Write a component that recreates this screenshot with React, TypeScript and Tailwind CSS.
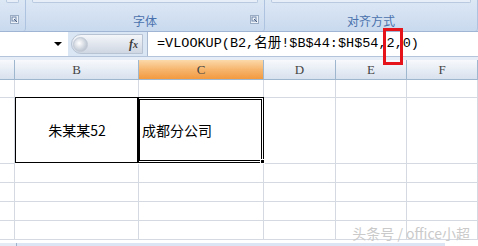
import React from "react";

const GRID = "#d4d9e2";
const COLS = ["", "B", "C", "D", "E", "F"];
const ROW_HEIGHTS = [18, 66, 19, 19, 19, 19];

function Launcher() {
  return (
    <svg width="9" height="9" viewBox="0 0 9 9" className="shrink-0">
      <rect x="0.5" y="0.5" width="8" height="8" fill="#eef3fa" stroke="#9aabc4" />
      <rect x="2" y="2" width="4" height="4" fill="none" stroke="#6f86a8" />
      <path d="M4 4 L7 7" stroke="#4a5f80" strokeWidth="1" />
    </svg>
  );
}

function RibbonGroup({ label, className }: { label?: string; className: string }) {
  return (
    <div
      className={`flex flex-col border-r border-[#aec3df] rounded-br-[3px] bg-gradient-to-b from-[#dde8f5] to-[#c9d9ee] ${className}`}
    >
      <div className="h-[3px] mx-[6px] border-x border-b border-[#b8c9e0] rounded-b-[2px] bg-[#e7eef8]" />
      <div className="flex-1 flex items-end justify-center pb-[3px] relative">
        {label && (
          <span className="text-[12px] leading-none text-[#4a72ad] pb-[1px] font-['Noto_Sans_CJK_SC',sans-serif]">
            {label}
          </span>
        )}
      </div>
    </div>
  );
}

export default function App() {
  return (
    <div className="w-[478px] h-[246px] overflow-hidden relative bg-white font-['Noto_Sans_CJK_SC',sans-serif]">
      {/* ribbon */}
      <div className="h-[32px] flex bg-[#c6d6ec] border-b border-[#9fb5d3]">
        <RibbonGroup className="w-[26px]" />
        <RibbonGroup label="字体" className="w-[239px]" />
        <RibbonGroup label="对齐方式" className="flex-1" />
      </div>
      <div className="absolute left-[10px] top-[15px]">
        <Launcher />
      </div>
      <div className="absolute left-[250px] top-[15px]">
        <Launcher />
      </div>

      {/* formula bar */}
      <div className="h-[25px] flex bg-[#dbe6f4] border-b border-[#b4c4da]">
        <div className="w-[68px] bg-white flex items-center justify-end pr-[6px]">
          <span className="w-0 h-0 border-x-[4px] border-x-transparent border-t-[4px] border-t-black" />
        </div>
        <div className="w-[79px] flex items-center pl-[3px] pr-[4px]">
          <div className="flex-1 h-[20px] rounded-l-full rounded-r-[2px] bg-gradient-to-b from-[#f4f6f9] via-[#e1e6ee] to-[#cfd7e3] border border-[#b7c3d3] flex items-center justify-between">
            <span className="w-[15px] h-[15px] ml-[1px] rounded-full bg-[radial-gradient(circle_at_40%_40%,#ffffff,#c9d0da_60%,#a9b3c2)] border border-[#c2cad6]" />
            <span className="text-[12px] italic font-bold leading-none text-[#3c3c3c] pr-[4px] font-['Liberation_Serif',serif]">
              f<span className="text-[10px]">x</span>
            </span>
          </div>
        </div>
        <div className="flex-1 bg-white border-l border-[#a9b9cf] flex items-center pl-[9px]">
          <span className="text-[13.5px] leading-none text-black whitespace-pre font-['Liberation_Mono','Noto_Sans_CJK_SC',monospace]">
            =VLOOKUP(B2,名册!$B$44:$H$54,2,0)
          </span>
        </div>
      </div>

      <div className="h-[3px] bg-[#e6edf6]" />

      {/* grid */}
      <div className="grid grid-cols-[15px_124px_125px_72px_71px_1fr]">
        {COLS.map((c) => (
          <div
            key={c || "corner"}
            className={`h-[20px] flex items-center justify-center border-r border-b border-[#9eb6ce] text-[13px] leading-none text-[#444] font-['Liberation_Serif',serif] ${
              c === "C"
                ? "bg-gradient-to-b from-[#fbd9a9] via-[#f6b56d] to-[#f29a3e]"
                : "bg-gradient-to-b from-[#f7f9fc] to-[#d8e1ee]"
            }`}
          >
            {c}
          </div>
        ))}
        {ROW_HEIGHTS.map((h, r) =>
          COLS.map((c, ci) => {
            const key = `${r}-${ci}`;
            if (r === 1 && c === "B") {
              return (
                <div
                  key={key}
                  style={{ height: h }}
                  className="border border-black -mt-px flex items-center justify-center text-[14px] text-black"
                >
                  朱某某52
                </div>
              );
            }
            if (r === 1 && c === "C") {
              return (
                <div
                  key={key}
                  style={{ height: h }}
                  className="relative border-[3px] border-double border-black -mt-px -ml-[2px] flex items-center pl-[2px] text-[14px] text-black"
                >
                  成都分公司
                  <span className="absolute -right-[4px] -bottom-[4px] w-[5px] h-[5px] bg-black border border-white" />
                </div>
              );
            }
            return (
              <div
                key={key}
                style={{ height: h, borderColor: GRID }}
                className="border-r border-b"
              />
            );
          })
        )}
      </div>

      {/* bottom scrollbar strip */}
      <div className="h-[6px] flex items-end">
        <div className="w-[17px] h-[3px] bg-[#e4ebf5] border-r border-[#9fb2cc]" />
        <div className="w-[428px] h-[3px] bg-[#dbe5f3]" />
      </div>

      {/* highlight annotation */}
      <div className="absolute left-[383px] top-[28px] w-[20px] h-[37px] border-[3px] border-[#e5141b]" />

      {/* watermark */}
      <div className="absolute right-[8px] bottom-[6px] text-[14px] leading-none text-[#cacaca] font-['Noto_Sans_CJK_SC',sans-serif]">
        头条号 / office小超
      </div>
    </div>
  );
}
